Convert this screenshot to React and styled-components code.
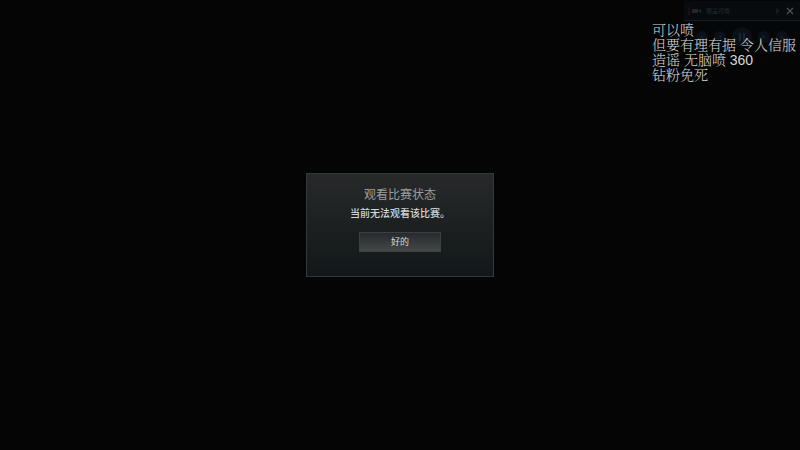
import React from "react";
import styled, { createGlobalStyle } from "styled-components";

const GlobalStyle = createGlobalStyle`
  * { box-sizing: border-box; }
  body {
    margin: 0;
    background: #050505;
    font-family: "Liberation Sans", "Noto Sans CJK SC", sans-serif;
  }
`;

const Screen = styled.main`
  position: relative;
  display: grid;
  place-items: center;
  min-height: 100vh;
  overflow: hidden;
`;

const Dialog = styled.section`
  display: flex;
  flex-direction: column;
  align-items: center;
  min-width: 188px;
  padding: 12px 24px 24px;
  border: 1px solid #343a3a;
  background: linear-gradient(#282a2a, #1c2021 50%, #12181a);
`;

const Title = styled.h1`
  margin: 0;
  font-size: 12px;
  line-height: 18px;
  font-weight: 400;
  color: #9a9e9e;
`;

const Message = styled.p`
  margin: 2px 0 0;
  font-size: 10px;
  line-height: 16px;
  font-weight: 500;
  color: #d4d6d6;
`;

const Confirm = styled.button`
  width: 82px;
  height: 20px;
  margin-top: 10px;
  padding: 0;
  border: 1px solid #3b4042;
  background: linear-gradient(#262a2c, #454849);
  font-family: inherit;
  font-size: 9px;
  line-height: 16px;
  font-weight: 400;
  color: #d8d8d8;
`;

const CameraPanel = styled.aside`
  position: absolute;
  top: 1px;
  right: 0;
  width: 116px;
`;

const PanelHeader = styled.header`
  display: flex;
  align-items: center;
  gap: 4px;
  height: 20px;
  padding: 0 5px 0 4px;
  border-bottom: 1px solid #161d20;
  background: #070b0d;
  color: #20282c;
`;

const PanelTitle = styled.span`
  flex: 1;
  font-size: 6px;
  line-height: 10px;
`;

const IconButton = styled.button`
  display: flex;
  padding: 0;
  border: 0;
  background: none;
  color: ${({ $tone }) => $tone};
`;

const Playback = styled.div`
  display: flex;
  align-items: center;
  justify-content: center;
  gap: 6px;
  height: 32px;
  background: #050607;
`;

const Round = styled.button`
  display: grid;
  place-items: center;
  width: ${({ $size }) => $size}px;
  height: ${({ $size }) => $size}px;
  padding: 0;
  border: 0;
  border-radius: 50%;
  background: #0b0f17;
  color: #1a2435;
`;

const Notes = styled.div`
  position: absolute;
  top: 23px;
  right: 0;
  width: 148px;
  font-family: "Liberation Sans", "Noto Serif CJK SC", "Noto Sans CJK SC", sans-serif;
  font-size: 14px;
  line-height: 15px;
  font-weight: 300;
  color: #d6d6d6;
  white-space: nowrap;
`;

const Line = styled.div``;

const notes = ["可以喷", "但要有理有据 令人信服", "造谣 无脑喷 360", "钻粉免死"];

const transport = [
  { label: "后退", size: 12, path: "M7 2 3 5l4 3z" },
  { label: "减速", size: 12, path: "M7 2 3 5l4 3z" },
  { label: "暂停", size: 20, path: "M2 1h2v8H2zM6 1h2v8H6z" },
  { label: "加速", size: 12, path: "M3 2l4 3-4 3z" },
  { label: "前进", size: 12, path: "M3 2l4 3-4 3z" },
];

export default function App() {
  return (
    <>
      <GlobalStyle />
      <Screen>
        <Dialog role="dialog" aria-labelledby="status-title">
          <Title id="status-title">观看比赛状态</Title>
          <Message>当前无法观看该比赛。</Message>
          <Confirm type="button">好的</Confirm>
        </Dialog>
        <CameraPanel>
          <PanelHeader>
            <svg width="14" height="8" viewBox="0 0 14 8" aria-hidden="true">
              <path d="M0 0h2v8H0z" fill="#200c10" />
              <path d="M4 2h6v4H4zM10 4l3-2v4z" fill="currentColor" />
            </svg>
            <PanelTitle>覆盖视角</PanelTitle>
            <IconButton type="button" aria-label="展开" $tone="#161e22">
              <svg width="6" height="8" viewBox="0 0 6 8">
                <path d="M1 1l4 3-4 3z" fill="currentColor" />
              </svg>
            </IconButton>
            <IconButton type="button" aria-label="关闭" $tone="#4a5358">
              <svg width="10" height="10" viewBox="0 0 10 10">
                <path d="M2 2l6 6M8 2L2 8" stroke="currentColor" strokeWidth="1.2" />
              </svg>
            </IconButton>
          </PanelHeader>
          <Playback>
            {transport.map(({ label, size, path }) => (
              <Round key={label} type="button" aria-label={label} $size={size}>
                <svg width={size / 2} height={size / 2} viewBox="0 0 10 10">
                  <path d={path} fill="currentColor" />
                </svg>
              </Round>
            ))}
          </Playback>
        </CameraPanel>
        <Notes>
          {notes.map((text) => (
            <Line key={text}>{text}</Line>
          ))}
        </Notes>
      </Screen>
    </>
  );
}
